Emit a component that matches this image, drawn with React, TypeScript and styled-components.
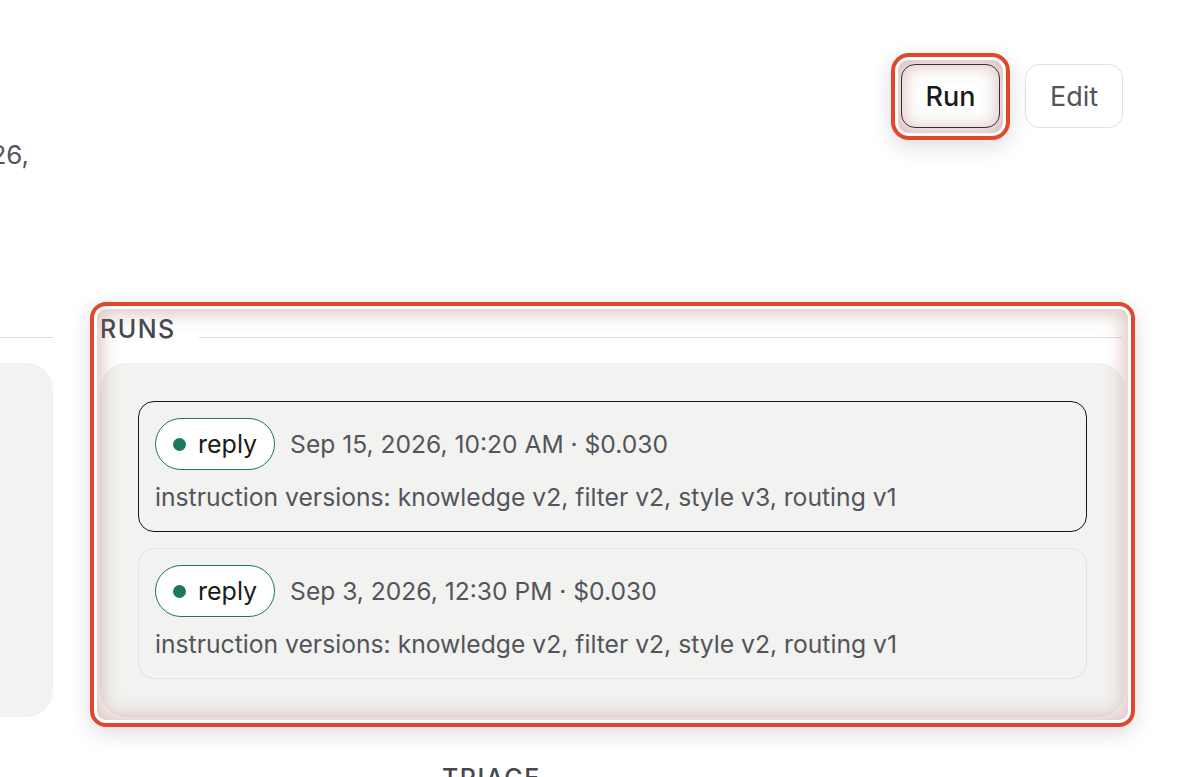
import * as React from 'react';
import styled, { createGlobalStyle, css } from 'styled-components';

const GlobalStyle = createGlobalStyle`
    html, body {
        margin: 0;
        padding: 0;
        background: #ffffff;
        overflow: hidden;
    }
    body {
        font-family: Inter, "Noto Sans", "Liberation Sans", sans-serif;
        color: #1a1a1a;
    }
`;

const palette = {
    text: '#1a1a1a',
    muted: '#52555b',
    label: '#45474f',
    rule: '#dcdcda',
    panel: '#f2f2f0',
    cardBorder: '#e2e2df',
    green: '#1d7a55',
    red: '#e0482e',
};

// focus ring used to call out a region of the page
const highlight = (inset: string, radius: number, glow = 0.36) => css`
    position: relative;

    &::after {
        content: '';
        position: absolute;
        inset: ${inset};
        border: 4px solid ${palette.red};
        border-radius: ${radius}px;
        box-shadow:
            0 6px 22px rgba(0, 0, 0, 0.14),
            inset 0 0 0 3px #ffffff,
            inset 0 0 18px 8px rgba(160, 100, 90, ${glow});
        pointer-events: none;
    }
`;

const Page = styled.div`
    width: 1125px;
    padding-top: 64px;
`;

const Header = styled.header`
    display: flex;
    justify-content: space-between;
    align-items: flex-start;
    height: 106px;
`;

const Meta = styled.div`
    display: flex;
    justify-content: flex-end;
    width: 29px;
    margin-top: 76px;
`;

const MetaText = styled.span`
    white-space: nowrap;
    font-size: 26px;
    line-height: 30px;
    color: ${palette.muted};
`;

const Actions = styled.div`
    display: flex;
    gap: 25px;
    padding-right: 2px;
`;

const Button = styled.button<{ $primary?: boolean; $focused?: boolean }>`
    width: ${(p) => (p.$primary ? 99 : 98)}px;
    height: 64px;
    padding: 0;
    border-radius: 14px;
    background: #ffffff;
    font-family: inherit;
    font-size: 27px;
    font-weight: ${(p) => (p.$primary ? 500 : 400)};
    color: ${(p) => (p.$primary ? palette.text : palette.muted)};
    border: ${(p) => (p.$primary ? '1.5px solid #1f1f1f' : '1.5px solid #e1e1df')};
    ${(p) => p.$focused && highlight('-12px -11px -13px -11px', 18, 0.42)};
`;

const Columns = styled.div`
    display: grid;
    grid-template-columns: 53px 1025px;
    gap: 47px;
    margin-top: 142px;
`;

const Aside = styled.aside`
    display: flex;
    flex-direction: column;
`;

const AsideRule = styled.div`
    height: 25px;
    border-bottom: 1px solid ${palette.rule};
`;

const AsidePanel = styled.div`
    margin-top: 25px;
    height: 354px;
    background: ${palette.panel};
    border-radius: 0 26px 26px 0;
`;

const Section = styled.section<{ $focused?: boolean }>`
    display: flex;
    flex-direction: column;
    ${(p) => p.$focused && highlight('-10px', 16)};
`;

const SectionHead = styled.div`
    display: flex;
    align-items: flex-end;
    gap: 23px;
`;

const Label = styled.h2`
    margin: 0;
    padding-top: 3px;
    font-size: 25px;
    line-height: 28px;
    font-weight: 500;
    letter-spacing: 1.5px;
    color: ${palette.label};
`;

const SectionRule = styled.div`
    flex: 1;
    height: 1px;
    margin: 0 3px 5px 0;
    background: ${palette.rule};
`;

const RunList = styled.ul`
    list-style: none;
    margin: 20px 0 0;
    padding: 38px;
    display: flex;
    flex-direction: column;
    gap: 16px;
    background: ${palette.panel};
    border-radius: 26px;
`;

const RunCard = styled.li<{ $active?: boolean }>`
    display: flex;
    flex-direction: column;
    gap: 10px;
    padding: 16px 16px 17px;
    border-radius: 16px;
    border: 1.5px solid ${(p) => (p.$active ? '#161616' : palette.cardBorder)};
`;

const RunTop = styled.div`
    display: flex;
    align-items: center;
    gap: 15px;
`;

const Badge = styled.span`
    display: inline-flex;
    align-items: center;
    gap: 12px;
    height: 52px;
    padding: 0 17px;
    box-sizing: border-box;
    border: 1.5px solid ${palette.green};
    border-radius: 26px;
    background: #ffffff;
    font-size: 25px;
    color: ${palette.text};
`;

const Dot = styled.span`
    width: 13px;
    height: 13px;
    border-radius: 50%;
    background: ${palette.green};
`;

const RunWhen = styled.span`
    font-size: 24.6px;
    color: ${palette.muted};
`;

const RunVersions = styled.div`
    font-size: 24.7px;
    line-height: 34px;
    color: ${palette.muted};
`;

const Footer = styled.div`
    padding-left: 442px;
    margin-top: 44px;
`;

type Run = {
    when: string;
    cost: string;
    versions: string;
    active?: boolean;
};

const runs: Run[] = [
    {
        when: 'Sep 15, 2026, 10:20 AM',
        cost: '$0.030',
        versions: 'knowledge v2, filter v2, style v3, routing v1',
        active: true,
    },
    {
        when: 'Sep 3, 2026, 12:30 PM',
        cost: '$0.030',
        versions: 'knowledge v2, filter v2, style v2, routing v1',
    },
];

const App: React.FC = () => {
    return (
        <>
            <GlobalStyle />
            <Page>
                <Header>
                    <Meta>
                        <MetaText>Last updated Sep 15, 2026,</MetaText>
                    </Meta>
                    <Actions>
                        <Button $primary $focused>
                            Run
                        </Button>
                        <Button>Edit</Button>
                    </Actions>
                </Header>
                <Columns>
                    <Aside>
                        <AsideRule />
                        <AsidePanel />
                    </Aside>
                    <Section $focused>
                        <SectionHead>
                            <Label>RUNS</Label>
                            <SectionRule />
                        </SectionHead>
                        <RunList>
                            {runs.map((run, i) => (
                                <RunCard key={i} $active={run.active}>
                                    <RunTop>
                                        <Badge>
                                            <Dot />
                                            reply
                                        </Badge>
                                        <RunWhen>
                                            {run.when} · {run.cost}
                                        </RunWhen>
                                    </RunTop>
                                    <RunVersions>
                                        instruction versions: {run.versions}
                                    </RunVersions>
                                </RunCard>
                            ))}
                        </RunList>
                    </Section>
                </Columns>
                <Footer>
                    <Label>TRIAGE</Label>
                </Footer>
            </Page>
        </>
    );
};

export default App;
